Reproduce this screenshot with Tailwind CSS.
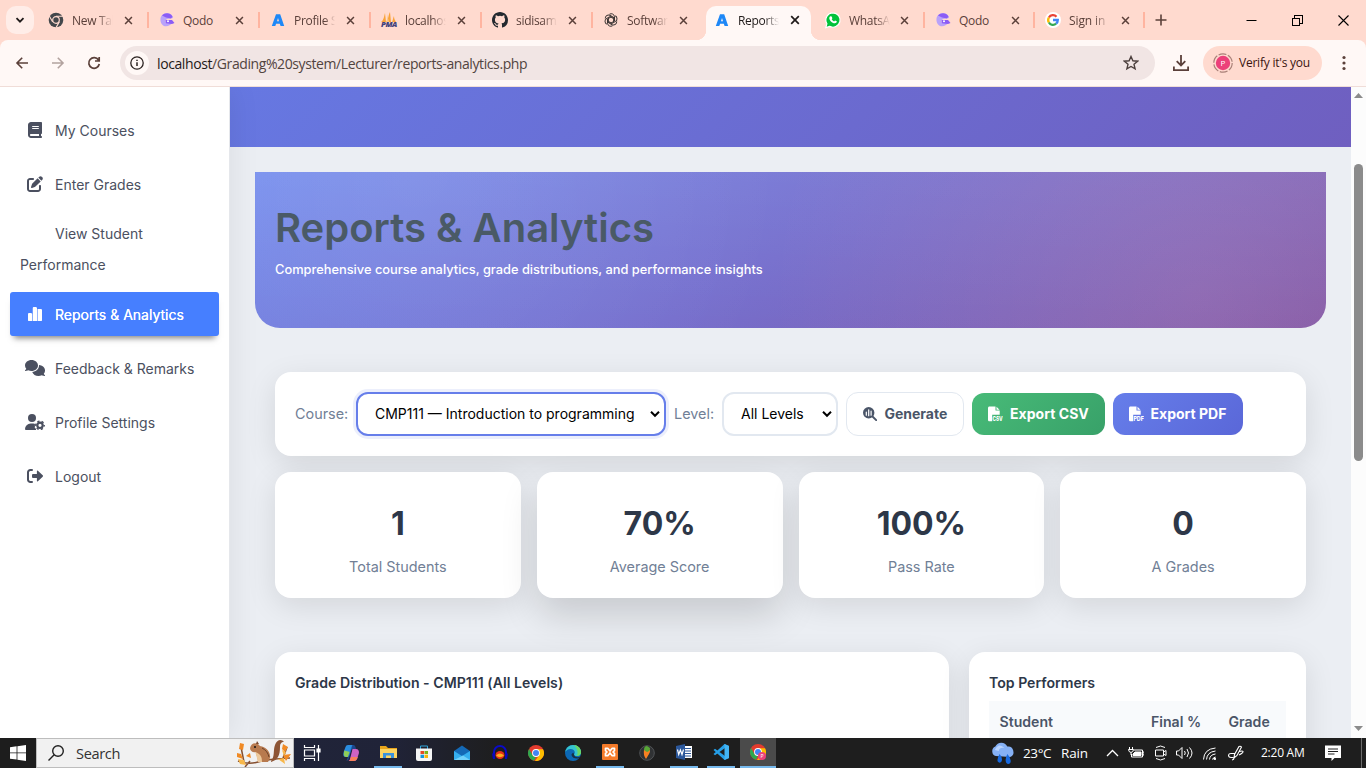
<!DOCTYPE html>
<html lang="en">
<head>
<meta charset="utf-8">
<title>Reports &amp; Analytics</title>
<script src="https://cdn.jsdelivr.net/npm/@tailwindcss/browser@4"></script>
</head>
<body class="w-[1366px] h-[768px] overflow-hidden flex flex-col font-['Inter',sans-serif] bg-white">
<svg class="hidden">
  <defs>
    <symbol id="x" viewBox="0 0 10 10"><path d="M1.2 1.2l7.6 7.6M8.8 1.2L1.2 8.8" stroke="currentColor" stroke-width="1.7" fill="none"/></symbol>
    <symbol id="qodo" viewBox="0 0 16 16"><path d="M1.500 6.500C2 3 5 1.200 8 1.200c3.500 0 5.700 2 6 4.800L8 7 6 9l3 2 4-.5c-1 2.500-3.500 3.800-6 3.800C3.500 14.300 1 11 1.500 6.500z" fill="#b9a2fa"/><path d="M3 3.500C6 .5 11 .5 13.500 4.500L12 6.500 7 5.500zM6.500 8h6.500l2.500 3-2.500 1-6-.8z" fill="#8b5cf6"/><circle cx="9" cy="9.200" r="1" fill="#fff"/></symbol>
    <symbol id="aa" viewBox="0 0 16 16"><path d="M6 2.200h4.200L14.200 14h-3.600l-.8-2.200H6.100L5.300 14H1.800zM8 6L7 9.300h2z" fill="#1e88f7"/></symbol>
    <symbol id="chrome" viewBox="0 0 16 16"><circle cx="8" cy="8" r="8" fill="#e33b2e"/><path d="M1.100 4L5 11l3 1-2 3.800A8 8 0 0 1 1.100 4z" fill="#2da94f"/><path d="M8 4.200h7A8 8 0 0 1 7 16l4.300-6z" fill="#fdbd00"/><circle cx="8" cy="8" r="3.900" fill="#fff"/><circle cx="8" cy="8" r="3" fill="#4285f4"/></symbol>
    <symbol id="filedoc" viewBox="0 0 16 16"><path d="M2.500.5h6v4h4.200v4.300H5.200v6.500H2.500C1.700 15.300 1 14.700 1 14V2C1 1.100 1.600.5 2.500.5zM9.500.7l3 3h-3z" fill="#fff"/></symbol>
  </defs>
</svg>

<!-- Tab strip -->
<div class="h-10 shrink-0 bg-[#ffdacf] flex items-center font-['Open_Sans',sans-serif] text-[12px] tracking-[-0.3px] text-[#5b403a] [&_span]:pt-0.5">
  <div class="w-[37px] shrink-0 pl-1.5"><div class="w-7 h-7 rounded-[10px] bg-[#ffede8] flex items-center justify-center"><svg class="w-2.5 h-2.5" viewBox="0 0 10 10"><path d="M1.500 3.200L5 6.700l3.500-3.500" fill="none" stroke="#1f1a19" stroke-width="1.800"/></svg></div></div>
  <div class="w-[112px] h-4 shrink-0 pl-[11px] flex items-center border-r-2 border-[#ffb4a0]">
    <svg class="w-4 h-4 shrink-0" viewBox="0 0 16 16"><circle cx="8" cy="8" r="7.300" fill="#43474b"/><circle cx="8" cy="8" r="3.300" fill="#43474b" stroke="#ffdacf" stroke-width="1.200"/><path d="M8 4.200h7M4.700 9.900L1.300 4M11.300 9.900L8 15.600" stroke="#ffdacf" stroke-width="1.100"/></svg>
    <span class="ml-2 w-[41px] overflow-hidden whitespace-nowrap [mask-image:linear-gradient(90deg,#000_60%,transparent)]">New Tab</span><svg class="ml-[11px] w-[9px] h-[9px]"><use href="#x"/></svg>
  </div>
  <div class="w-[111px] h-4 shrink-0 pl-[10px] flex items-center border-r-2 border-[#ffb4a0]">
    <svg class="w-4 h-4 shrink-0"><use href="#qodo"/></svg><span class="ml-2 w-[41px]">Qodo</span><svg class="ml-[11px] w-[9px] h-[9px]"><use href="#x"/></svg>
  </div>
  <div class="w-[111px] h-4 shrink-0 pl-[10px] flex items-center border-r-2 border-[#ffb4a0]">
    <svg class="w-4 h-4 shrink-0"><use href="#aa"/></svg><span class="ml-2 w-[41px] overflow-hidden whitespace-nowrap [mask-image:linear-gradient(90deg,#000_75%,transparent)]">Profile Settings</span><svg class="ml-[11px] w-[9px] h-[9px]"><use href="#x"/></svg>
  </div>
  <div class="w-[111px] h-4 shrink-0 pl-[10px] flex items-center border-r-2 border-[#ffb4a0]">
    <svg class="w-4 h-4 shrink-0 overflow-visible" viewBox="0 0 16 16"><path d="M0 10C3 8 3 4 4 1l1 9zM5 10C8 7 7 3 9 0l1 10zM11 10c1-2 1-4 2-6 0 3 1 4 2 6z" fill="#f9a33a"/><path d="M5 10C7 7 6 5 6 2l2 8z" fill="#fbc98a"/><text x="0" y="14.800" font-size="6" font-weight="900" font-style="italic" textLength="16" lengthAdjust="spacingAndGlyphs" fill="#42407a" font-family="Open Sans">PMA</text></svg><span class="ml-2 w-[41px] overflow-hidden whitespace-nowrap [mask-image:linear-gradient(90deg,#000_65%,transparent)]">localhost</span><svg class="ml-[11px] w-[9px] h-[9px]"><use href="#x"/></svg>
  </div>
  <div class="w-[111px] h-4 shrink-0 pl-[10px] flex items-center border-r-2 border-[#ffb4a0]">
    <svg class="w-4 h-4 shrink-0" viewBox="0 0 16 16"><path fill="#24292f" d="M8 0C3.580 0 0 3.580 0 8c0 3.540 2.290 6.530 5.470 7.590.4.070.55-.17.55-.38 0-.19-.01-.82-.01-1.490-2.010.37-2.530-.49-2.690-.94-.09-.23-.48-.94-.82-1.130-.28-.15-.68-.52-.01-.53.63-.01 1.080.58 1.230.82.72 1.210 1.870.87 2.330.66.07-.52.28-.87.51-1.070-1.780-.2-3.640-.89-3.640-3.950 0-.87.31-1.590.82-2.150-.08-.2-.36-1.020.08-2.120 0 0 .67-.21 2.200.82a7.640 7.640 0 0 1 4 0c1.530-1.040 2.200-.82 2.200-.82.44 1.100.16 1.920.08 2.120.51.560.82 1.270.82 2.150 0 3.070-1.870 3.750-3.650 3.950.29.250.54.730.54 1.480 0 1.070-.01 1.930-.01 2.200 0 .21.150.46.55.38A8.010 8.010 0 0 0 16 8c0-4.420-3.580-8-8-8z"/></svg><span class="ml-2 w-[41px] overflow-hidden whitespace-nowrap [mask-image:linear-gradient(90deg,#000_65%,transparent)]">sidisam/</span><svg class="ml-[11px] w-[9px] h-[9px]"><use href="#x"/></svg>
  </div>
  <div class="w-[113px] h-4 shrink-0 pl-[10px] flex items-center">
    <svg class="w-4 h-4 shrink-0" viewBox="-8 -8 16 16" fill="none" stroke="#3b3433" stroke-width="1"><g id="petal"><path d="M-1.500-5.800a3.300 3.300 0 0 1 5 2.500V1L0 3"/></g><use href="#petal" transform="rotate(60)"/><use href="#petal" transform="rotate(120)"/><use href="#petal" transform="rotate(180)"/><use href="#petal" transform="rotate(240)"/><use href="#petal" transform="rotate(300)"/></svg><span class="ml-2 w-[41px] overflow-hidden whitespace-nowrap [mask-image:linear-gradient(90deg,#000_65%,transparent)]">Software</span><svg class="ml-[11px] w-[9px] h-[9px]"><use href="#x"/></svg>
  </div>
  <div class="relative w-[105px] h-[34px] self-end shrink-0 pl-2 flex items-center rounded-t-[10px] bg-[#fff8f6] text-[#1f1a19] pb-1.5">
    <div class="absolute -left-2.5 bottom-0 w-2.5 h-2.5 bg-[radial-gradient(circle_at_0_0,#ffdacf_10px,#fff8f6_10.5px)]"></div>
    <div class="absolute -right-2.5 bottom-0 w-2.5 h-2.5 bg-[radial-gradient(circle_at_100%_0,#ffdacf_10px,#fff8f6_10.5px)]"></div>
    <svg class="w-4 h-4 shrink-0"><use href="#aa"/></svg><span class="ml-2 w-[41px] overflow-hidden whitespace-nowrap [mask-image:linear-gradient(90deg,#000_65%,transparent)]">Reports</span><svg class="ml-[11px] w-[10px] h-[10px]"><use href="#x"/></svg>
  </div>
  <div class="w-[114px] h-4 shrink-0 pl-[14px] flex items-center border-r-2 border-[#ffb4a0]">
    <svg class="w-4 h-4 shrink-0 overflow-visible" viewBox="0 0 16 16"><path d="M8 .8a7.200 7.200 0 1 1-3.400 13.600L.8 15.500l1.100-3.800A7.200 7.200 0 0 1 8 .8z" fill="#00c23a" stroke="#fff" stroke-width="1.200"/><path d="M5.500 4.300l1.200.2.700 1.700-.7 1c.5 1 1.300 1.700 2.400 2.200l.9-.9 1.800.8c.1 1.300-.8 2-2 2C7 11.200 4.300 8.400 4.300 6c0-.7.500-1.400 1.200-1.700z" fill="#fff"/></svg><span class="ml-2 w-[41px] overflow-hidden whitespace-nowrap [mask-image:linear-gradient(90deg,#000_65%,transparent)]">WhatsApp</span><svg class="ml-[10px] w-[9px] h-[9px]"><use href="#x"/></svg>
  </div>
  <div class="w-[110px] h-4 shrink-0 pl-[10px] flex items-center border-r-2 border-[#ffb4a0]">
    <svg class="w-4 h-4 shrink-0"><use href="#qodo"/></svg><span class="ml-2 w-[41px]">Qodo</span><svg class="ml-[11px] w-[9px] h-[9px]"><use href="#x"/></svg>
  </div>
  <div class="w-[110px] h-4 shrink-0 pl-[10px] flex items-center border-r-2 border-[#ffb4a0]">
    <svg class="w-4 h-4 shrink-0 overflow-visible" viewBox="0 0 16 16"><circle cx="8" cy="8" r="8" fill="#fff"/><g fill="none" stroke-width="2.300"><path d="M3.900 5.500A4.800 4.800 0 0 1 11.500 4.700" stroke="#ea4335"/><path d="M3.900 5.500a4.800 4.800 0 0 0 0 5" stroke="#fbbc05"/><path d="M3.900 10.500a4.800 4.800 0 0 0 7.200 1.200" stroke="#34a853"/><path d="M11.100 11.700A4.700 4.700 0 0 0 12.800 8H8" stroke="#4285f4"/></g></svg><span class="ml-2 w-[41px] overflow-hidden whitespace-nowrap tracking-[-0.1px] [mask-image:linear-gradient(90deg,#000_60%,transparent)]">Sign in</span><svg class="ml-[11px] w-[9px] h-[9px]"><use href="#x"/></svg>
  </div>
  <svg class="ml-[10px] w-3 h-3 shrink-0" viewBox="0 0 12 12"><path d="M6 .5v11M.5 6h11" stroke="#5b403a" stroke-width="1.600"/></svg>
  <svg class="ml-[79px] w-[11px] h-[11px] shrink-0" viewBox="0 0 11 11"><path d="M.5 5.500h10" stroke="#000"/></svg>
  <svg class="ml-[35px] w-[11px] h-[11px] shrink-0" viewBox="0 0 11 11" fill="none" stroke="#000" shape-rendering="crispEdges"><path d="M.5 3.500h7v7h-7zM2.500 3V.5h8v8H8"/></svg>
  <svg class="ml-[35px] w-[11px] h-[11px] shrink-0" viewBox="0 0 11 11"><path d="M.5.5l10 10M10.500.5l-10 10" stroke="#000" stroke-width="1.100"/></svg>
</div>

<!-- Toolbar -->
<div class="h-[47px] shrink-0 bg-[#ffdacf]">
<div class="h-[47px] bg-[#fff8f6] rounded-t-lg border-b border-[#f0ddd8] flex items-center font-['Open_Sans',sans-serif]">
  <svg class="ml-4 w-3 h-3 shrink-0 overflow-visible" viewBox="0 0 12 12" fill="none" stroke="#5b403a" stroke-width="1.600"><path d="M12 6H1M6.200.8L1 6l5.200 5.200"/></svg>
  <svg class="ml-6 w-3 h-3 shrink-0 overflow-visible" viewBox="0 0 12 12" fill="none" stroke="#b3a39f" stroke-width="1.600"><path d="M0 6h11M5.800.8L11 6l-5.200 5.200"/></svg>
  <svg class="ml-6 w-3 h-3 shrink-0 overflow-visible" viewBox="0 0 12 12" fill="none" stroke="#5b403a" stroke-width="1.700"><path d="M10.500 3A5.300 5.300 0 1 0 11.300 7M11.200 0v4H7"/></svg>
  <div class="ml-5 w-[1035px] h-[34px] rounded-full bg-[#f1e5e4] flex items-center shrink-0">
    <div class="ml-[5px] w-6 h-6 shrink-0 rounded-full bg-[#fff8f6] flex items-center justify-center"><svg class="w-[14px] h-[14px]" viewBox="0 0 14 14"><circle cx="7" cy="7" r="6.200" fill="none" stroke="#2b2220" stroke-width="1.300"/><path d="M7 6.200V10M7 3.700v1.400" stroke="#2b2220" stroke-width="1.500"/></svg></div>
    <div class="ml-2 w-[966px] shrink-0 text-[14px] tracking-[-0.4px] text-[#514440] whitespace-nowrap"><span class="text-[#1f1a19]">localhost</span>/Grading%20system/Lecturer/reports-analytics.php</div>
    <svg class="w-4 h-4 shrink-0" viewBox="0 0 16 16"><path d="M8 1.500l1.900 4.300 4.700.4L11 9.300l1.100 4.600L8 11.500l-4.100 2.400L5 9.300 1.400 6.200l4.700-.4z" fill="none" stroke="#4c3f3c" stroke-width="1.400"/></svg>
  </div>
  <svg class="ml-[18px] w-4 h-4 shrink-0" viewBox="0 0 16 16" fill="none" stroke="#5b403a" stroke-width="1.800"><path d="M8 0v10.500M3.700 6.200L8 10.500l4.300-4.300M.9 11.500v3.600h14.200v-3.600"/></svg>
  <div class="ml-[14px] w-[119px] h-[34px] rounded-full bg-[#ffdacf] flex items-center shrink-0 pl-2.5">
    <svg class="w-5 h-5 shrink-0" viewBox="0 0 20 20"><circle cx="10" cy="10" r="9.200" fill="none" stroke="#a98078" stroke-width="1.200" stroke-dasharray="8 1.630"/><circle cx="10" cy="10" r="7.200" fill="#ec407a"/><text x="10" y="13" font-size="8" text-anchor="middle" fill="#fff">P</text></svg>
    <span class="ml-1.5 text-[12px] tracking-[-0.23px] text-[#3a1410] whitespace-nowrap">Verify it's you</span>
  </div>
  <svg class="ml-5 w-1 h-4 shrink-0" viewBox="0 0 4 16" fill="#5b403a"><circle cx="2" cy="2.500" r="1.600"/><circle cx="2" cy="8" r="1.600"/><circle cx="2" cy="13.500" r="1.600"/></svg>
</div>
</div>

<!-- Page -->
<div class="h-[651px] shrink-0 flex overflow-hidden">
  <nav class="relative z-10 w-[230px] shrink-0 bg-white border-r border-[#e5e7eb] shadow-[0_0_30px_rgba(0,0,0,0.08)] px-2.5 pt-[21px] text-[14px] text-[#4b5060]">
    <div class="h-11 mb-2.5 px-[15px] flex items-center"><span class="w-5 flex justify-center"><svg class="h-4" viewBox="0 0 448 512" fill="currentColor"><path d="M96 0C43 0 0 43 0 96V416c0 53 43 96 96 96H384h32c17.700 0 32-14.300 32-32s-14.300-32-32-32V384c17.700 0 32-14.300 32-32V32c0-17.700-14.300-32-32-32H384 96zm0 384H352v64H96c-17.700 0-32-14.300-32-32s14.300-32 32-32zm32-240c0-8.800 7.200-16 16-16H336c8.800 0 16 7.200 16 16s-7.200 16-16 16H144c-8.800 0-16-7.200-16-16zm16 48H336c8.800 0 16 7.200 16 16s-7.200 16-16 16H144c-8.800 0-16-7.200-16-16s7.200-16 16-16z"/></svg></span><span class="ml-2.5">My Courses</span></div>
    <div class="h-11 px-[15px] flex items-center"><span class="w-5 flex justify-center"><svg class="h-4" viewBox="0 0 512 512" fill="currentColor"><path d="M471.600 21.700c-21.900-21.900-57.300-21.900-79.200 0L362.300 51.700l97.900 97.900 30.100-30.100c21.900-21.900 21.900-57.300 0-79.200L471.600 21.700zm-299.200 220c-6.100 6.100-10.800 13.600-13.500 21.900l-29.600 88.800c-2.900 8.600-.6 18.100 5.800 24.600s15.900 8.700 24.600 5.800l88.800-29.600c8.200-2.700 15.700-7.400 21.900-13.500L437.700 172.300 339.700 74.300 172.400 241.700zM96 64C43 64 0 107 0 160V416c0 53 43 96 96 96H352c53 0 96-43 96-96V320c0-17.700-14.300-32-32-32s-32 14.300-32 32v96c0 17.700-14.300 32-32 32H96c-17.700 0-32-14.300-32-32V160c0-17.700 14.300-32 32-32h96c17.700 0 32-14.300 32-32s-14.300-32-32-32H96z"/></svg></span><span class="ml-2.5">Enter Grades</span></div>
    <div class="mt-3 h-[74px] px-2.5 leading-[31px]"><span class="pl-[35px]">View Student</span><br>Performance</div>
    <div class="h-11 mb-2.5 px-[15px] flex items-center rounded-[3px] bg-[#467fff] text-white [text-shadow:0_0_0.500px_#fff] shadow-[0_6px_6px_-4px_rgba(0,0,0,0.5)]"><span class="w-5 flex justify-center"><svg class="h-4" viewBox="0 0 448 512" fill="currentColor"><path d="M152 70c0-22 18-38 38-38h56c24 0 42 18 42 42V480H152zM-8 270c0-26 18-46 44-46h52c26 0 44 20 44 46V480H36c-26 0-44-18-44-44zM306 96h104c26 0 46 20 46 46V436c0 26-20 44-46 44H306z"/></svg></span><span class="ml-2.5">Reports &amp; Analytics</span></div>
    <div class="h-11 mb-2.5 px-[15px] flex items-center"><span class="w-5 flex justify-center"><svg class="h-4 w-5" viewBox="0 0 640 512" fill="currentColor"><path d="M208 352c114.900 0 208-78.800 208-176S322.900 0 208 0S0 78.800 0 176c0 38.600 14.700 74.300 39.600 103.400c-3.500 9.400-8.700 17.700-14.200 24.700c-4.800 6.200-9.700 11-13.300 14.300c-1.800 1.600-3.300 2.900-4.300 3.700C1 327.200-1.400 334.400 .8 340.900S9.100 352 16 352c21.800 0 43.800-5.600 62.100-12.500c9.200-3.500 17.800-7.400 25.200-11.400C134.100 343.300 169.800 352 208 352zM448 176c0 112.300-99.100 196.900-216.500 207C255.800 457.400 336.400 512 432 512c38.200 0 73.900-8.700 104.700-23.900c7.500 4 16 7.900 25.200 11.400c18.300 6.900 40.300 12.500 62.100 12.500c6.900 0 13.100-4.500 15.200-11.100c2.100-6.600-.2-13.800-5.800-17.900c-1-.8-2.500-2-4.300-3.700c-3.600-3.300-8.500-8.100-13.300-14.300c-5.500-7-10.700-15.400-14.200-24.700c24.900-29 39.600-64.700 39.600-103.400c0-92.800-84.900-168.900-192.600-175.500z"/></svg></span><span class="ml-2.5">Feedback &amp; Remarks</span></div>
    <div class="h-11 mb-2.5 px-[15px] flex items-center"><span class="w-5 flex justify-center"><svg class="h-4 w-5" viewBox="0 0 20 16" fill="currentColor"><circle cx="7" cy="4" r="4"/><path d="M0 15.100A5.600 5.600 0 0 1 5.600 9.500h2.800q1 0 1.900.4l-.6 1 .5 1-.6 1.300L11 15v1H.9Q0 16 0 15.100z"/><circle cx="15" cy="11.300" r="2.700" fill="none" stroke="currentColor" stroke-width="2.200"/><circle cx="15" cy="11.300" r="4.200" fill="none" stroke="currentColor" stroke-width="1.500" stroke-dasharray="2.200 2.198" stroke-dashoffset="1"/></svg></span><span class="ml-2.5">Profile Settings</span></div>
    <div class="h-11 px-[15px] flex items-center"><span class="w-5 flex justify-center"><svg class="h-4" viewBox="0 0 16 16" fill="currentColor"><path d="M5 2H3.300A2.300 2.300 0 0 0 1 4.300v7.400A2.300 2.300 0 0 0 3.300 14H5" fill="none" stroke="currentColor" stroke-width="2" stroke-linecap="round"/><path d="M15.700 7.300L10.900 2.800c-.5-.5-1-.2-1 .4V6H6q-1 0-1 1v2q0 1 1 1h3.900v2.800c0 .6.500.9 1 .4l4.800-4.500q.6-.7 0-1.400z"/></svg></span><span class="ml-2.5">Logout</span></div>
  </nav>

  <main class="w-[1121px] shrink-0 bg-[#ebeef3] overflow-hidden">
    <div class="h-[60px] bg-[linear-gradient(135deg,#6678e2_0%,#6f5fc0_100%)]"></div>
    <section class="mt-[25px] mx-[25px] h-[156px] rounded-b-[25px] px-5 pt-[31px] bg-[radial-gradient(circle_at_88%_80%,rgba(255,190,200,0.14)_0%,transparent_45%),radial-gradient(circle_at_15%_0%,rgba(255,255,255,0.08)_0%,transparent_40%),linear-gradient(rgba(255,255,255,0.09),rgba(255,255,255,0.04)),linear-gradient(150deg,#6c86ec_0%,#7069cb_50%,#7a50a2_100%)]">
      <h1 class="text-[40px] leading-[50px] font-semibold text-[#4a5a66] whitespace-nowrap">Reports &amp; Analytics</h1>
      <p class="mt-[7px] text-[12.840px] leading-5 font-medium text-white whitespace-nowrap">Comprehensive course analytics, grade distributions, and performance insights</p>
    </section>
    <div class="mt-11 ml-[45px] w-[1031px]">
      <section class="h-[84px] rounded-2xl bg-white shadow-[0_8px_30px_rgba(0,0,0,0.1)] flex items-center px-5 text-[14.400px] text-[#718096]">
        <span class="w-[61px] whitespace-nowrap">Course:</span>
        <div class="w-[310px] h-11 rounded-xl border-2 border-[#667eea] shadow-[0_0_0_3px_rgba(102,126,234,0.12)] bg-white text-black text-[14px] flex items-center justify-between pl-[17px] pr-[3px] pb-px whitespace-nowrap"><span>CMP111 — Introduction to programming</span><svg class="w-3 h-3" viewBox="0 0 12 12"><path d="M2 3.800l4 4 4-4" fill="none" stroke="#000" stroke-width="2"/></svg></div>
        <span class="ml-2 w-12 whitespace-nowrap">Level:</span>
        <div class="w-[116px] h-11 rounded-xl border-2 border-[#e2e8f0] bg-white text-black text-[14px] flex items-center justify-between pl-[17px] pr-[3px] pb-px whitespace-nowrap"><span>All Levels</span><svg class="w-3 h-3" viewBox="0 0 12 12"><path d="M2 3.800l4 4 4-4" fill="none" stroke="#000" stroke-width="2"/></svg></div>
        <div class="ml-2 w-[118px] h-11 rounded-xl border border-[#e2e8f0] flex items-center pl-[15.500px] pb-px text-[#4a5568] text-[14px] font-bold whitespace-nowrap tracking-[-0.02px]"><svg class="w-[14px] h-[14px] mr-2" viewBox="0 0 14 14"><circle cx="5.700" cy="5.700" r="5.700" fill="#4a5568"/><path d="M9 9l4.200 4.200" stroke="#4a5568" stroke-width="1.900" stroke-linecap="round"/><path d="M3.300 5v3.200M5.700 2.800v5.900M8.100 4.200v4" stroke="#fff" stroke-width="1.200" stroke-linecap="round"/></svg>Generate</div>
        <div class="ml-2 w-[133px] h-[42px] rounded-xl bg-[linear-gradient(135deg,#48bb78,#38a169)] flex items-center pl-[15px] pb-px text-white text-[14px] font-bold whitespace-nowrap tracking-[0.04px]"><svg class="w-4 h-4 mr-[7px]" viewBox="0 0 16 16"><use href="#filedoc"/><text x="5.400" y="15.200" font-size="6.500" font-weight="800" textLength="10.400" lengthAdjust="spacingAndGlyphs" fill="#fff">CSV</text></svg>Export CSV</div>
        <div class="ml-2 w-[130px] h-[42px] rounded-xl bg-[linear-gradient(135deg,#667eea,#5a67d8)] flex items-center pl-[14.500px] pb-px text-white text-[14px] font-bold whitespace-nowrap"><svg class="w-4 h-4 mr-[7px]" viewBox="0 0 16 16"><use href="#filedoc"/><text x="5.400" y="15.200" font-size="6.500" font-weight="800" textLength="10.400" lengthAdjust="spacingAndGlyphs" fill="#fff">PDF</text></svg>Export PDF</div>
      </section>
      <section class="mt-4 grid grid-cols-4 gap-4 text-center text-[14.400px] text-[#718096]">
        <div class="h-[126px] rounded-2xl bg-white shadow-[0_8px_30px_rgba(0,0,0,0.1)] pt-8"><div class="text-[32px] leading-10 font-bold text-[#2d3748]">1</div><div class="mt-3 leading-[22px]">Total Students</div></div>
        <div class="h-[126px] rounded-2xl bg-white shadow-[0_18px_36px_rgba(0,0,0,0.15)] pt-8"><div class="text-[32px] leading-10 font-bold text-[#2d3748]">70%</div><div class="mt-3 leading-[22px]">Average Score</div></div>
        <div class="h-[126px] rounded-2xl bg-white shadow-[0_8px_30px_rgba(0,0,0,0.1)] pt-8"><div class="text-[32px] leading-10 font-bold text-[#2d3748]">100%</div><div class="mt-3 leading-[22px]">Pass Rate</div></div>
        <div class="h-[126px] rounded-2xl bg-white shadow-[0_8px_30px_rgba(0,0,0,0.1)] pt-8"><div class="text-[32px] leading-10 font-bold text-[#2d3748]">0</div><div class="mt-3 leading-[22px]">A Grades</div></div>
      </section>
      <section class="mt-[54px] flex gap-5 font-semibold text-[14.100px]">
        <div class="w-[674px] h-[300px] rounded-2xl bg-white shadow-[0_8px_30px_rgba(0,0,0,0.1)] px-5 pt-5 leading-[22px] text-[#2d3748] tracking-[0.025px]">Grade Distribution - CMP111 (All Levels)</div>
        <div class="w-[337px] h-[300px] rounded-2xl bg-white shadow-[0_8px_30px_rgba(0,0,0,0.1)] px-5 pt-5 leading-[22px] text-[#2d3748]">Top Performers
          <div class="mt-[7px] h-[60px] bg-[#f8fafc] pt-2.5 pl-[10.500px] flex text-[#4a5568]"><span class="w-[151.500px]">Student</span><span class="w-[77.500px]">Final %</span><span>Grade</span></div>
        </div>
      </section>
    </div>
  </main>

  <div class="w-[15px] bg-[#fcfcfc] flex flex-col items-center">
    <svg class="mt-1.5 w-[9px] h-[5px]" viewBox="0 0 9 5"><path d="M0 5L4.500 0 9 5z" fill="#8b8b8b"/></svg>
    <div class="mt-[66px] w-[9px] h-[297px] rounded-full bg-[#8b8b8b]"></div>
    <svg class="mt-[265px] w-[9px] h-[5px]" viewBox="0 0 9 5"><path d="M0 0l4.500 5L9 0z" fill="#8b8b8b"/></svg>
  </div>
</div>

<!-- Taskbar -->
<div class="relative z-20 h-[30px] shrink-0 flex items-center font-['Open_Sans',sans-serif] text-white bg-[linear-gradient(90deg,#1d1d1d_0px,#1d1d1d_36px,#202439_300px,#202338_390px,#1e1e1e_500px,#1e1e1e_100%)]">
  <svg class="ml-2.5 w-4 h-4 shrink-0" viewBox="0 0 16 16" fill="#fff"><path d="M0 2.200l6.600-.9v6.200H0zM7.400 1.200L16 0v7.500H7.400zM0 8.300h6.600v6.300L0 13.700zM7.400 8.300H16V16l-8.600-1.200z"/></svg>
  <div class="ml-2.5 w-[258px] h-[30px] shrink-0 bg-[#f1f1f1] border border-[#bdbdbd] flex items-center text-[#333] text-[15px]">
    <svg class="ml-[11px] w-4 h-4 shrink-0" viewBox="0 0 16 16" fill="none" stroke="#222" stroke-width="1.400"><circle cx="10" cy="6" r="5.300"/><path d="M6.200 9.800L.5 15.500"/></svg>
    <span class="ml-3 w-[160px] shrink-0 pt-0.5 text-[14.600px] tracking-[-0.35px]">Search</span>
    <svg class="w-14 h-7 shrink-0" viewBox="0 0 56 28"><path d="M2 22q10 4 20 1t32-4M8 23L5 8M46 22l5-14M14 22l-5 6" stroke="#865030" stroke-width="1.500" fill="none"/><path d="M4 4l4 1-1 6-4-1zM1 14l4 1 2 5-6-2zM47 5l5 3-3 5-3-3zM47 16l8-1-5 7zM10 17l4-3 1 5z" fill="#f08a24"/><path d="M2 20l6 1 2 5-6-1zM46 11l4 2-2 4zM42 20l6-1 1 6z" fill="#f8b84b"/><path d="M35 22c4-4 2-11 4-16 2-6 7-6 9-3-3 0-4 2-4 5 0 8-2 13-9 15z" fill="#8d5535"/><path d="M14 9c1-4 4-6 8-4l2 2c6 1 11 6 10 12l-2 4H22c0-4-2-7-2-10-3 1-6-1-6-4z" fill="#b87a4e"/><path d="M19 13c2 4 2 7 3 10h4c0-5-1-8-7-10z" fill="#edc99b"/><path d="M26 9c4 2 6 5 7 9" stroke="#6b422a" fill="none"/><circle cx="19" cy="8" r="1" fill="#111"/><path d="M20 5l1-3 2 3z" fill="#7b472c"/></svg>
  </div>
  <svg class="ml-[9px] w-[18px] h-4 shrink-0" viewBox="0 0 18 16" fill="none" stroke="#fff" stroke-width="1.200"><path d="M1.500 0v2.500h10V0M1.500 5h10v6h-10zM1.500 16v-2.500h10V16M15.500 0v16"/><path d="M14 4h3v3h-3z" fill="#fff"/></svg>
  <svg class="ml-[22px] w-4 h-4 shrink-0" viewBox="0 0 16 16"><path d="M5 0h4.500L6.500 10Q6 12 4 12H2.500C0 12 0 9 1 6L2.500 2Q3 0 5 0z" fill="#2a8de0"/><path d="M1.300 5.500L.8 9q0 3 2.500 3H5L7 7z" fill="#8fce58"/><path d="M9 0h1.500q1.500 0 2 2l.5 2H10q-1.500 0-2 2L6 13q-.7 3-2.500 3z" fill="#1d5fc4" opacity=".6"/><path d="M9.500 4H13c3 0 3.500 3 2.500 5.500L14 14q-.8 2-3 2H5.500q1 0 1.500-2z" fill="#cf63c4"/><path d="M8 12l-1 3q-.5 1-1.500 1H11q2 0 3-2l.8-2z" fill="#f9805a"/></svg>
  <div class="ml-[15px] w-7 h-full flex flex-col items-center justify-between pt-1.5 shrink-0"><svg class="w-[17px] h-4 shrink-0" viewBox="0 0 17 16"><path d="M0 2h6l2 2h9v10H0z" fill="#e9a51b"/><path d="M0 5h17v9H0z" fill="#fcd462"/><path d="M3 14V9h11v5h-3v-2.500H6V14z" fill="#3a92dd"/></svg><div class="w-full h-0.5 bg-[#76b9ed]"></div></div>
  <svg class="ml-[14px] w-4 h-4 shrink-0" viewBox="0 0 16 16"><path d="M4.500 5V1h7v4" fill="none" stroke="#30a7dc"/><path d="M0 3.500h16V14q0 2-2 2H2q-2 0-2-2z" fill="#f5f5f5"/><path d="M4.500 6H8v3H4.500z" fill="#e64a25"/><path d="M8.500 6H12v3H8.500z" fill="#7cb518"/><path d="M4.500 9.700H8V13H4.500z" fill="#1696dd"/><path d="M8.500 9.700H12V13H8.500z" fill="#fab60a"/></svg>
  <svg class="ml-[22px] w-4 h-4 shrink-0" viewBox="0 0 16 16"><path d="M0 6l8-5.500L16 6v9H0z" fill="#1469b6"/><path d="M0 6l8 5 8-5v9H0z" fill="#35aeee"/><path d="M0 15l9-4.500L16 15z" fill="#71d1fa"/></svg>
  <svg class="ml-[21px] w-[18px] h-4 shrink-0" viewBox="0 0 18 16"><path d="M3 11V7a6 6 0 0 1 12 0v4" fill="none" stroke="#0b0bc9" stroke-width="2"/><ellipse cx="9" cy="10" rx="4.500" ry="4" fill="#e5301b"/><path d="M5 10.500q4-4 8 0-4 3.500-8 0z" fill="#ffae1b"/><path d="M1 8.500h3V14H2zM14 8.500h3L16 14h-2z" fill="#0909bd"/></svg>
  <svg class="ml-[19px] w-4 h-4 shrink-0"><use href="#chrome"/></svg>
  <svg class="ml-[21px] w-4 h-4 shrink-0" viewBox="0 0 16 16"><circle cx="8" cy="8" r="8" fill="#0c68b5"/><path d="M.2 7C1 3 4 0 8 0c5 0 8 3.500 8 7 0 3-2 4-4.500 4-1.500 0-2.500-.7-2.500-1.500 0-.5.800-.8.800-2C9.800 5.500 8 4 5.500 4 3 4 1 5.500.2 7z" fill="#36c5ce"/><path d="M9 0c4 .3 7 3.500 7 7 0 3-2 4-4.500 4C14 8 12 3 9 0z" fill="#6bd765"/><path d="M9 9.500c0 2 3 3.500 6 2.300l-1 1.500c-3 .9-7-.3-7.500-3.300 0-1 .8-2 2-2.300z" fill="#1d1d1d" opacity=".75"/></svg>
  <div class="ml-[15px] w-7 h-full flex flex-col items-center justify-between pt-1.5 shrink-0"><svg class="w-4 h-4 shrink-0" viewBox="0 0 16 16"><rect width="16" height="16" rx="1" fill="#f47b2a"/><path d="M3.500 4.300h2.300L8 7l2.200-2.700h2.300v2.300L11 8l1.500 1.400v2.300h-2.300L8 9l-2.200 2.700H3.500V9.400L5 8 3.500 6.600z" fill="none" stroke="#fff" stroke-width="1.700" stroke-linejoin="round"/></svg><div class="w-full h-0.5 bg-[#76b9ed]"></div></div>
  <svg class="ml-[15px] w-4 h-4 shrink-0" viewBox="0 0 16 16"><circle cx="8" cy="8" r="7.300" fill="#303234" stroke="#505356"/><path d="M5 5l5-1q2 2 0 5l-3 5q-3-4-2-9z" fill="#f98122"/><path d="M5 5Q5 1 8 1l3 2q0 3-3 4z" fill="#58a837"/></svg>
  <div class="ml-[15px] w-7 h-full flex flex-col items-center justify-between pt-1.5 shrink-0"><svg class="w-4 h-4 shrink-0" viewBox="0 0 16 16"><path d="M7 2h9v12H7z" fill="#fff"/><path d="M9 4.500h6M9 7h6M9 9.500h6M9 12h6" stroke="#2b579a"/><path d="M0 2l9-2v16l-9-2z" fill="#2b579a"/><path d="M1.500 5.500l1.200 5L4.400 6 6 10.500l1.500-5" fill="none" stroke="#fff" stroke-width="1.200"/></svg><div class="w-full h-0.5 bg-[#76b9ed]"></div></div>
  <div class="ml-[9px] w-7 h-full flex flex-col items-center justify-between pt-1.5 shrink-0"><svg class="w-4 h-4 shrink-0" viewBox="0 0 16 16"><path d="M11.500 0L16 2v12l-4.500 2-11-10L2 4.700 12 12V4L2 11.300.5 10z" fill="#259fe8"/><path d="M11.500 0L16 2v12l-4.500 2z" fill="#43b4f3"/></svg><div class="w-full h-0.5 bg-[#76b9ed]"></div></div>
  <div class="ml-[5px] w-9 h-full bg-[#4b4b4b] flex flex-col items-center justify-between pt-1.5 shrink-0"><svg class="w-4 h-4 shrink-0" viewBox="0 0 16 16"><use href="#chrome"/><circle cx="12" cy="12" r="4" fill="#ec407a"/><text x="12" y="14" font-size="5" text-anchor="middle" fill="#fff">P</text></svg><div class="w-full h-0.5 bg-[#76b9ed]"></div></div>
  <svg class="ml-[215px] w-6 h-[22px] shrink-0" viewBox="0 0 25 22" preserveAspectRatio="none"><path d="M5 14a5 5 0 0 1-.5-9.500A7 7 0 0 1 17 4.500 5.500 5.500 0 0 1 20 15z" fill="#86b1f5"/><path d="M4 8q4-8 10-2-5-1-6 3z" fill="#b8d4ff"/><path d="M9 12q4 5 1.500 8-2 1.500-3.500-.5-1-3 2-7.500zM17 12q5 5 3 9-2 2-4 0-2-3 1-9z" fill="#1769e0"/></svg>
  <span class="ml-2 w-[28px] shrink-0 text-[13.500px] tracking-[-0.4px] whitespace-nowrap">23°C</span><span class="ml-[10px] w-[28px] shrink-0 text-[13.500px] tracking-[-0.2px]">Rain</span>
  <svg class="ml-[17px] w-[13px] h-2 shrink-0" viewBox="0 0 13 8"><path d="M1 7l5.500-5.500L12 7" fill="none" stroke="#fff" stroke-width="1.300"/></svg>
  <svg class="ml-[9px] w-4 h-3.5 shrink-0" viewBox="0 0 16 14" fill="none" stroke="#fff"><path d="M6 4h8.500v7h-11V8M14.500 6H16v3h-1.500M1.500 1v2M4.500 1v2M.5 3.500h5Q5.500 6 3 6.500.5 6 .5 3.500zM3 6.500V9"/><path d="M7 6h6v3.500H5V8z" fill="#fff"/></svg>
  <svg class="ml-[11px] w-3 h-4 shrink-0" viewBox="0 0 12 16" fill="none" stroke="#fff"><path d="M1 2.500Q5.500-.5 10 2.500M1 13.500q4.500 3 9 0M.5 5h8v6h-8zM8.500 7l2.500-1.500v5L8.500 9"/></svg>
  <svg class="ml-[9px] w-[17px] h-3.5 shrink-0" viewBox="0 0 17 14" fill="none" stroke="#fff"><path d="M.5 5h2L6 1.500v11L2.500 9h-2zM8.500 5q1.500 2 0 4M11 3q3 4 0 8M13.500 1.500q5 5.500 0 11"/></svg>
  <svg class="ml-2.5 w-[13px] h-[13px] shrink-0" viewBox="0 0 13 13" fill="none" stroke="#fff"><path d="M.5 12.500Q1 2 12.500 1M3.500 12.500Q4 5 12.500 4M6.500 12.500q.5-5 6-5.500M9.500 12.500q.5-2 3-2.500"/><circle cx="11.800" cy="11.800" r="1" fill="#fff"/></svg>
  <svg class="ml-3 w-4 h-4 shrink-0" viewBox="0 0 16 16" fill="none" stroke="#fff" stroke-width="1.100"><path d="M7 8.500H3q-2.500 0-2.500 2T3 12.500h1.500q1.500 0 1.500 1t-2 1.500M6 13l.5-3.500L11 1.500q1.500-.8 2.500.6L9 10.500 6 13zM11.500 6.500q3-1 3.500 0t-4 3.500"/></svg>
  <span class="ml-[17px] w-[44px] shrink-0 text-[12px] tracking-[-0.25px] whitespace-nowrap">2:20 AM</span>
  <svg class="ml-5 w-4 h-4 shrink-0" viewBox="0 0 16 16"><path d="M0 .5h16V13H9.500L6.500 16v-3H0z" fill="#fff"/><path d="M3 4h10M3 6.500h10M3 9h6.500" stroke="#1e1e1e"/></svg>
  <div class="ml-auto mr-1 w-px h-full bg-[#6b6b6b]"></div>
</div>
</body>
</html>
